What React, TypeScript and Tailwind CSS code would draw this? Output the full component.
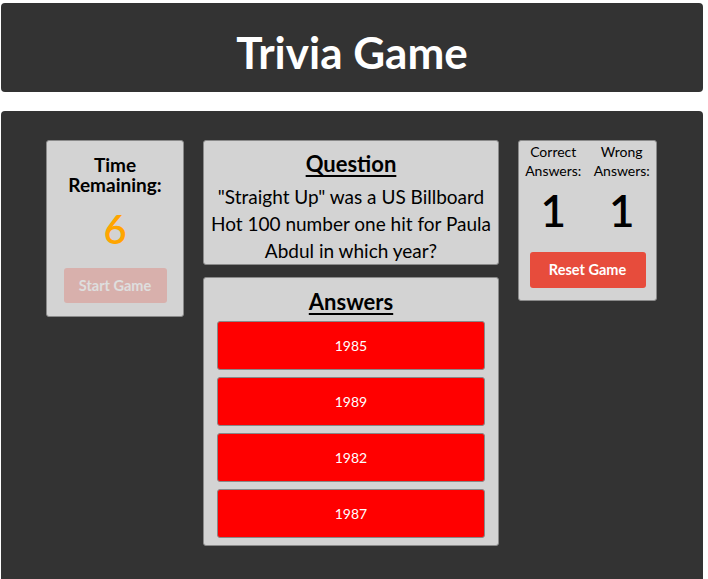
import React from "react";

export default function App() {
  const answers = ["1985", "1989", "1982", "1987"];
  return (
    <div className="min-h-[579px] bg-white" style={{ fontFamily: "Lato, 'Noto Sans', sans-serif" }}>
      <div className="pt-[3px] pl-[1px]">
        <div className="w-[702px] h-[89px] rounded-[4px] bg-[#333333] flex items-center justify-center">
          <h1 className="text-white font-bold text-[44px] leading-none pt-[8px]">Trivia Game</h1>
        </div>
        <div className="mt-[19px] w-[702px] h-[470px] rounded-t-[4px] bg-[#333333] pt-[29px] pl-[45px] flex items-start gap-[19px]">
          {/* Time panel */}
          <div className="w-[138px] rounded-[3px] border border-[#8a8a8a] bg-[#d3d3d3] pt-[14px] pb-[13px] flex flex-col items-center">
            <div className="text-[19px] font-bold leading-[20px] text-black text-center">
              <div className="h-[20px]">Time</div>
              <div className="h-[20px]">Remaining:</div>
            </div>
            <div className="mt-[10px] text-[40px] font-semibold leading-[48px] text-[#ffa500]">6</div>
            <button className="mt-[15px] w-[103px] h-[35px] rounded-[3px] bg-[#e74c3c] opacity-[0.25] text-white font-bold text-[14.5px]">
              Start Game
            </button>
          </div>
          {/* Middle column */}
          <div className="w-[296px] flex flex-col gap-[12px]">
            <div className="rounded-[3px] border border-[#8a8a8a] bg-[#d3d3d3] pt-[10px] text-center text-black">
              <div className="text-[22px] font-bold leading-[26px] underline underline-offset-[3px]">Question</div>
              <div className="mt-[6px] text-[19px] leading-[27px] px-[4px]">
                "Straight Up" was a US Billboard Hot 100 number one hit for Paula Abdul in which year?
              </div>
            </div>
            <div className="rounded-[3px] border border-[#8a8a8a] bg-[#d3d3d3] pt-[11px] pb-[7px] px-[13px] text-center">
              <div className="text-[22px] font-bold leading-[26px] underline underline-offset-[3px] text-black">Answers</div>
              <div className="mt-[6px] flex flex-col gap-[7px]">
                {answers.map((a) => (
                  <button
                    key={a}
                    className="h-[49px] w-full rounded-[3px] border border-[#888888] bg-[#ff0000] text-white text-[14px]"
                  >
                    {a}
                  </button>
                ))}
              </div>
            </div>
          </div>
          {/* Stats panel */}
          <div className="w-[139px] rounded-[3px] border border-[#8a8a8a] bg-[#d3d3d3] pt-[1px] pb-[12px] flex flex-col items-center">
            <div className="grid grid-cols-2 w-full text-center text-black">
              <div className="flex flex-col items-center">
                <div className="text-[14px] leading-[19px]">Correct<br />Answers:</div>
                <div className="mt-[5px] text-[44px] font-semibold leading-[50px]">1</div>
              </div>
              <div className="flex flex-col items-center">
                <div className="text-[14px] leading-[19px]">Wrong<br />Answers:</div>
                <div className="mt-[5px] text-[44px] font-semibold leading-[50px]">1</div>
              </div>
            </div>
            <button className="mt-[17px] w-[116px] h-[36px] rounded-[3px] bg-[#e74c3c] text-white font-bold text-[14.5px]">
              Reset Game
            </button>
          </div>
        </div>
      </div>
    </div>
  );
}
